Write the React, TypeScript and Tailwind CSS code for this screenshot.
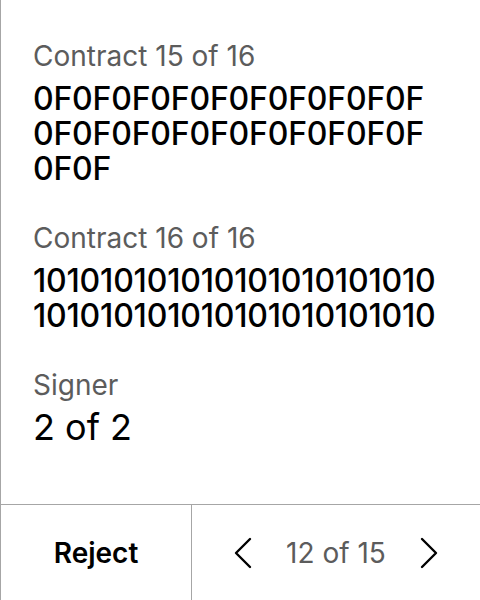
type Field = { label: string; lines: string[]; large?: boolean };

const fields: Field[] = [
  {
    label: "Contract 15 of 16",
    lines: ["0F0F0F0F0F0F0F0F0F0F", "0F0F0F0F0F0F0F0F0F0F", "0F0F"],
  },
  {
    label: "Contract 16 of 16",
    lines: ["101010101010101010101010", "101010101010101010101010"],
  },
  { label: "Signer", lines: ["2 of 2"], large: true },
];

function Chevron({ dir }: { dir: "left" | "right" }) {
  return (
    <svg width="20" height="32" viewBox="0 0 20 32" fill="none" className="shrink-0">
      <path
        d={dir === "left" ? "M17 2 L3 16 L17 30" : "M3 2 L17 16 L3 30"}
        stroke="black"
        strokeWidth="2.4"
        strokeLinecap="round"
        strokeLinejoin="round"
      />
    </svg>
  );
}

function FieldRow({ field }: { field: Field }) {
  return (
    <div>
      <p className="text-[28px] leading-[32px] text-[#5c5c5c]">{field.label}</p>
      <div
        className={
          field.large
            ? "mt-[9px] text-[36px] leading-[35px] text-black"
            : "mt-[9px] text-[32px] font-medium leading-[35px] tracking-[-0.2px] text-black"
        }
      >
        {field.lines.map((l, i) => (
          <p key={i} className="whitespace-nowrap">
            {l}
          </p>
        ))}
      </div>
    </div>
  );
}

export default function App() {
  return (
    <div
      className="flex h-[600px] w-[480px] flex-col border-l border-[#a6a6a6] bg-white"
      style={{ fontFamily: "Inter, 'Noto Sans', sans-serif" }}
    >
      <div className="flex flex-1 flex-col gap-[36px] pl-8 pt-[40px]">
        {fields.map((f) => (
          <FieldRow key={f.label} field={f} />
        ))}
      </div>
      <div className="flex h-[96px] border-t border-[#a6a6a6]">
        <button className="flex w-[191px] items-center justify-center border-r border-[#a6a6a6] text-[28px] font-semibold text-black">
          Reject
        </button>
        <div className="flex flex-1 items-center justify-center gap-[33px]">
          <Chevron dir="left" />
          <span className="text-[28px] text-[#5c5c5c]">12 of 15</span>
          <Chevron dir="right" />
        </div>
      </div>
    </div>
  );
}
